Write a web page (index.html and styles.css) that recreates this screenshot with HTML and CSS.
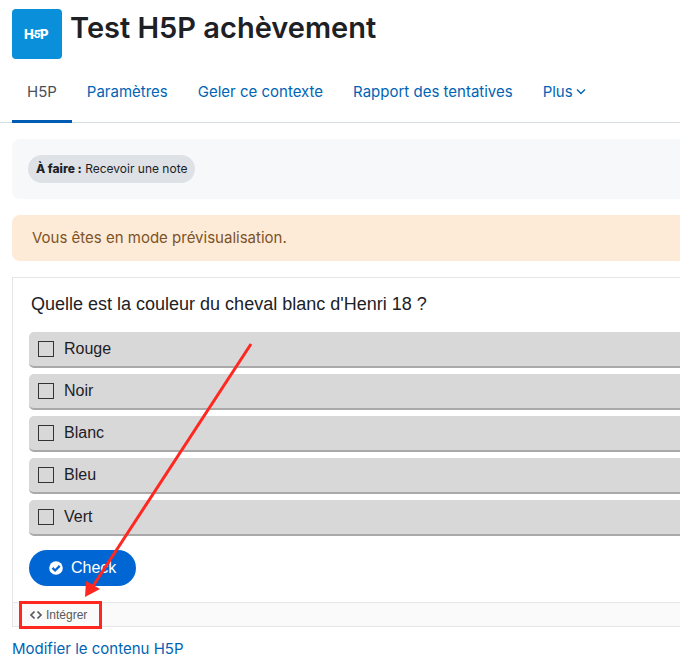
FILE: index.html
```
<!DOCTYPE html>
<html lang="fr">
<head>
  <meta charset="UTF-8" />
  <meta name="viewport" content="width=device-width, initial-scale=1.0" />
  <title>Test H5P achèvement</title>
  <link rel="stylesheet" href="styles.css">
</head>
<body>
  <header class="page-header">
    <svg class="activity-icon" viewBox="0 0 50 50" role="img" aria-label="H5P">
      <rect width="50" height="50" rx="4" fill="#0a8fdb" />
      <g fill="#fff" font-family="Inter, sans-serif" font-weight="800">
        <text x="12" y="30" font-size="13">H</text>
        <text x="22" y="29" font-size="10">5</text>
        <text x="28" y="30" font-size="13">P</text>
      </g>
      <path d="M20 26.500h4M26 21.500h4" stroke="#fff" stroke-width="1.500" />
    </svg>
    <h1>Test H5P achèvement</h1>
  </header>

  <nav class="tabs">
    <a href="#" class="tab active">H5P</a>
    <a href="#" class="tab">Paramètres</a>
    <a href="#" class="tab">Geler ce contexte</a>
    <a href="#" class="tab">Rapport des tentatives</a>
    <a href="#" class="tab">Plus<svg class="chevron" width="10" height="8" viewBox="0 0 10 8"><path d="M1 1.500l4 4 4-4" fill="none" stroke="currentColor" stroke-width="1.400" /></svg></a>
  </nav>

  <main class="content">
    <div class="completion">
      <span class="badge"><strong>À faire :</strong> Recevoir une note</span>
    </div>

    <div class="alert">Vous êtes en mode prévisualisation.</div>

    <section class="h5p">
      <form class="question">
        <p class="question-text" id="question">Quelle est la couleur du cheval blanc d'Henri 18 ?</p>
        <div class="answers" role="group" aria-labelledby="question">
          <label class="answer"><input type="checkbox">Rouge</label>
          <label class="answer"><input type="checkbox">Noir</label>
          <label class="answer"><input type="checkbox">Blanc</label>
          <label class="answer"><input type="checkbox">Bleu</label>
          <label class="answer"><input type="checkbox">Vert</label>
        </div>
        <button type="button" class="check">
          <svg width="14" height="14" viewBox="0 0 14 14"><circle cx="7" cy="7" r="6.800" fill="#fff" /><path d="M3.500 6.900l2.600 2.600 4.600-4.600" fill="none" stroke="#0066d3" stroke-width="2.200" /></svg>
          Check
        </button>
      </form>
      <div class="actions">
        <button type="button" class="embed">
          <svg width="14" height="10" viewBox="0 0 14 10"><path d="M5.500 1.500L2 5l3.500 3.500M8.500 1.500L12 5 8.500 8.500" fill="none" stroke="currentColor" stroke-width="1.700" /></svg>
          Intégrer
        </button>
      </div>

      <!-- arrow pointing at the embed button -->
      <svg class="arrow" width="170" height="256" viewBox="0 0 170 256">
        <path d="M166 3L8 245" stroke="#ff2821" stroke-width="3" />
        <path d="M0 256L1 240L15 248Z" fill="#ff2821" />
      </svg>
    </section>

    <a href="#" class="edit-link">Modifier le contenu H5P</a>
  </main>
</body>
</html>
```
FILE: styles.css
```
* {
  box-sizing: border-box;
}

body {
  margin: 0;
  font-family: Inter, sans-serif;
  font-size: 15px;
  line-height: 22px;
  color: #1d2125;
  background-color: #fff;
  overflow-x: hidden;
}

a {
  color: #0064b4;
  text-decoration: none;
}

.page-header {
  display: flex;
  gap: 8px;
  padding: 9px 0 0 12px;
}

.activity-icon {
  width: 50px;
  height: 50px;
}

h1 {
  margin: 0;
  font-size: 29px;
  line-height: 38px;
  font-weight: 600;
}

.tabs {
  display: flex;
  height: 62px;
  margin-top: 2px;
  padding-left: 12px;
  border-bottom: 1px solid #d5dce2;
  white-space: nowrap;
}

.tab {
  height: 62px;
  padding: 20px 15px 0;
  border-bottom: 3px solid transparent;
}

.tab.active {
  color: #495057;
  border-bottom-color: #005cb3;
}

.chevron {
  margin-left: 3px;
  vertical-align: 1px;
}

.content {
  padding: 16px 0 12px 12px;
}

.completion {
  padding: 16px;
  border-radius: 8px 0 0 8px;
  background-color: #f6f8fa;
}

.badge {
  display: inline-block;
  padding: 0 8px;
  border-radius: 14px;
  font-size: 12px;
  line-height: 28px;
  background-color: #dee2e6;
  vertical-align: top;
}

.badge strong {
  font-weight: 800;
}

.alert {
  margin-top: 16px;
  padding: 12px 20px;
  border-radius: 8px 0 0 8px;
  color: #7c5327;
  background-color: #fdebd8;
}

.h5p {
  position: relative;
  margin-top: 16px;
  border: 1px solid #e6e6e6;
  border-right: none;
  font-family: "Liberation Sans", Arial, sans-serif;
}

.question {
  padding: 15px 0 16px 16px;
}

.question-text {
  margin: 0 0 17px;
  padding-left: 2px;
  font-size: 18px;
}

.answers {
  display: grid;
  gap: 6px;
}

.answer {
  display: flex;
  align-items: center;
  gap: 10px;
  height: 36px;
  padding-left: 9px;
  border-bottom: 2px solid #a9a9a9;
  border-radius: 5px 0 0 5px;
  font-size: 16px;
  background-color: #d8d8d8;
}

.answer input {
  appearance: none;
  width: 16px;
  height: 16px;
  margin: 0;
  border: 1px solid #333;
}

.check {
  display: flex;
  align-items: center;
  gap: 8px;
  height: 36px;
  margin-top: 14px;
  padding: 0 20px;
  border: none;
  border-radius: 18px;
  font: 16px "Liberation Sans", Arial, sans-serif;
  color: #fff;
  background-color: #0066d3;
}

.actions {
  height: 24px;
  padding-left: 6px;
  border-top: 1px solid #e6e6e6;
  background-color: #fafafa;
}

.embed {
  position: relative;
  display: flex;
  align-items: center;
  gap: 3px;
  height: 24px;
  padding: 0 15px 0 10px;
  border: none;
  font: 12px "Liberation Sans", Arial, sans-serif;
  color: #595959;
  background: none;
}

/* red frame around the button */
.embed::after {
  content: "";
  position: absolute;
  inset: -2px 0;
  border: 3px solid #ff2821;
}

.arrow {
  position: absolute;
  top: 63px;
  left: 72px;
  pointer-events: none;
}

.edit-link {
  display: inline-block;
  margin-top: 11px;
}
```
